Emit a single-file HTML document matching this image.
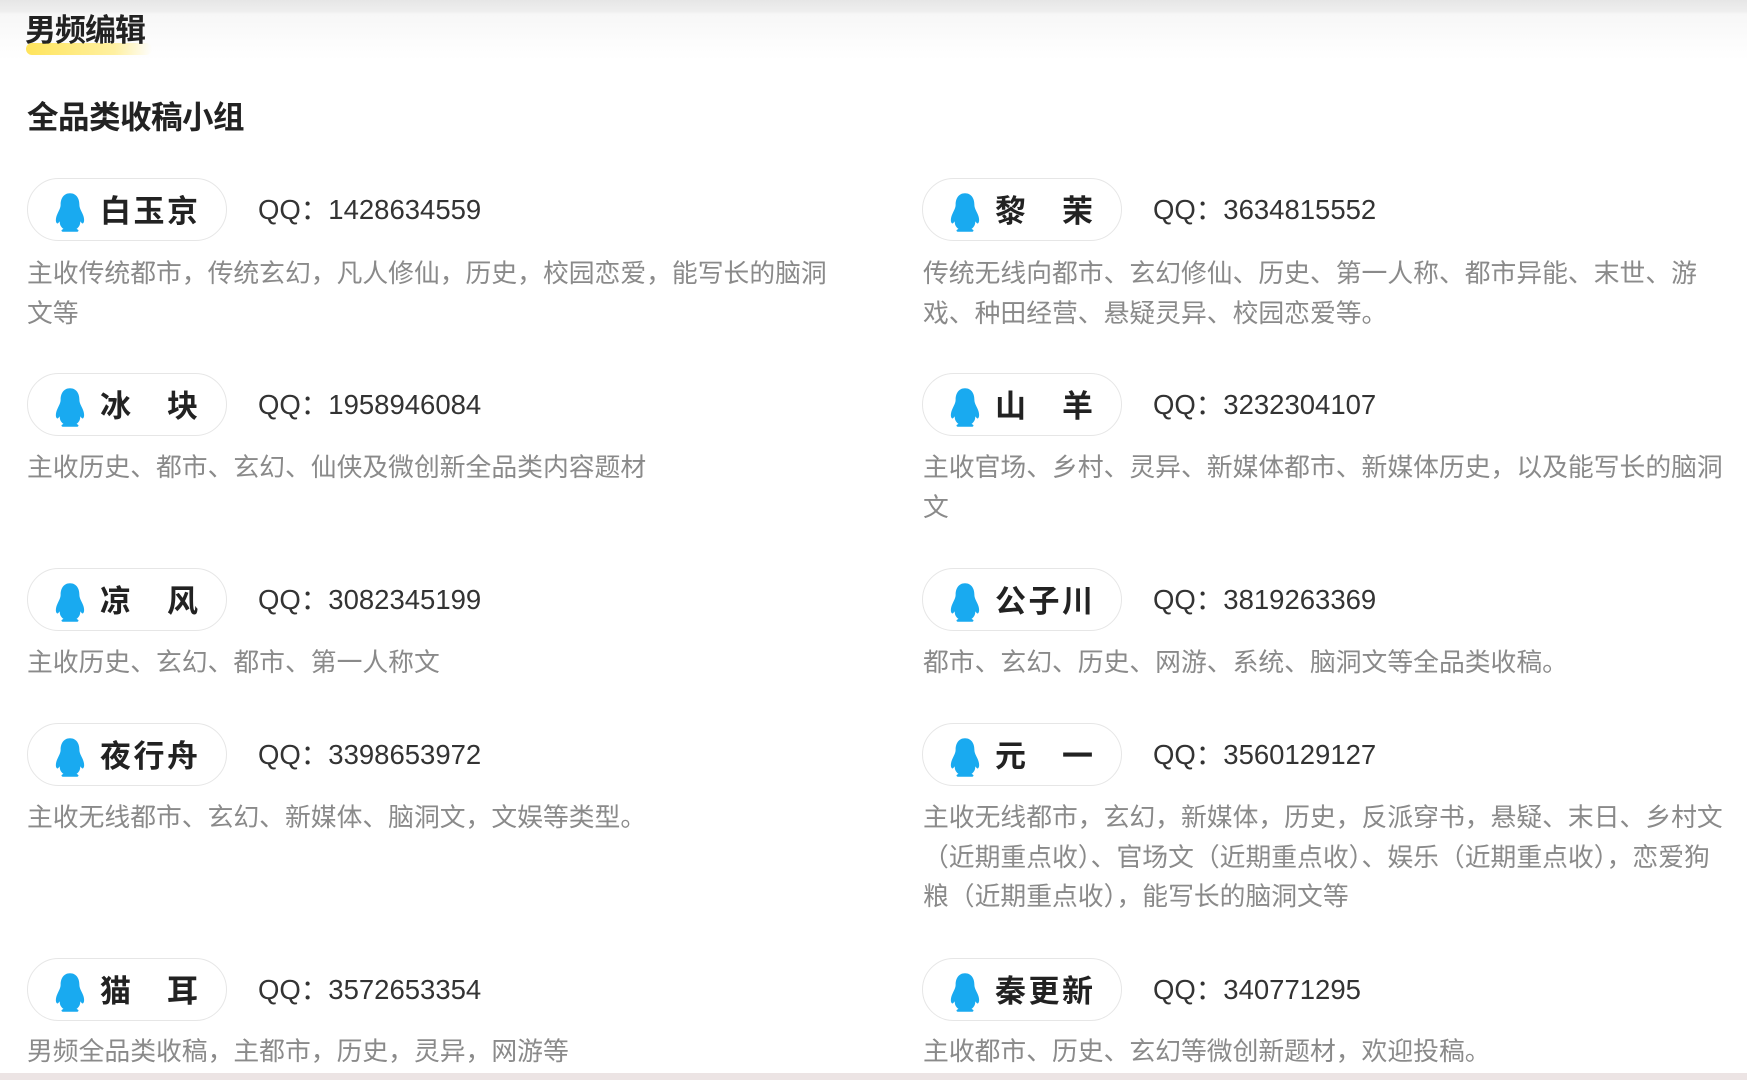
<!DOCTYPE html>
<html><head><meta charset="utf-8"><style>
body{margin:0;width:1747px;height:1080px;background:#fff;font-family:"Liberation Sans","Noto Sans CJK SC",sans-serif;position:relative;overflow:hidden}
.top{position:absolute;left:0;top:0;width:1747px;height:60px;background:linear-gradient(#e6e6e6 0,#eeeeee 11px,#f7f7f7 14px,#fff 60px)}
.h1{position:absolute;left:25px;top:11px;font-size:31px;font-weight:bold;color:#222;line-height:40px;letter-spacing:-1px}
.hl{position:absolute;left:26px;top:43px;width:126px;height:12px;border-radius:6px;background:linear-gradient(90deg,#ffe45c,#fff0a0 70%,rgba(255,250,220,0))}
.h2{position:absolute;left:27px;top:97px;font-size:31.5px;font-weight:bold;color:#222;line-height:40px;letter-spacing:-0.5px}
.pill{position:absolute;width:200px;height:63px;box-sizing:border-box;border:1.5px solid #e6e6e6;border-radius:32px;background:#fff}
.pill svg{position:absolute;left:27px;top:13px}
.name{position:absolute;left:72px;top:3px;width:98px;line-height:60px;font-size:31px;font-weight:bold;color:#222;text-align:justify;text-align-last:justify}
.qq{position:absolute;font-size:27.5px;color:#333;line-height:40px}
.d{position:absolute;width:808px;font-size:25.8px;color:#8a8a8a;line-height:39.5px}
.bot{position:absolute;left:0;top:1073px;width:1747px;height:7px;background:#ece4e4}
</style></head><body>
<div class="top"></div>
<div class="hl"></div>
<div class="h1">男频编辑</div>
<div class="h2">全品类收稿小组</div>

<div class="pill" style="left:27px;top:178px"><svg width="30" height="40" viewBox="0 0 32 42"><path d="M16 1C9 1 6 7 6 13c0 3-1 5-3 9-2 4-3 9-1 11 1 1 2-1 3-2 0 3 1 6 4 8-2 1-3 2-1 3h16c2-1 1-2-1-3 3-2 4-5 4-8 1 1 2 3 3 2 2-2 1-7-1-11-2-4-3-6-3-9 0-6-3-12-10-12z" fill="#19aaf0"/></svg><div class="name">白玉京</div></div>
<div class="qq" style="left:258px;top:190px">QQ：1428634559</div>
<div class="d" style="left:27px;top:255px">主收传统都市，传统玄幻，凡人修仙，历史，校园恋爱，能写长的脑洞文等</div>

<div class="pill" style="left:922px;top:178px"><svg width="30" height="40" viewBox="0 0 32 42"><path d="M16 1C9 1 6 7 6 13c0 3-1 5-3 9-2 4-3 9-1 11 1 1 2-1 3-2 0 3 1 6 4 8-2 1-3 2-1 3h16c2-1 1-2-1-3 3-2 4-5 4-8 1 1 2 3 3 2 2-2 1-7-1-11-2-4-3-6-3-9 0-6-3-12-10-12z" fill="#19aaf0"/></svg><div class="name">黎茉</div></div>
<div class="qq" style="left:1153px;top:190px">QQ：3634815552</div>
<div class="d" style="left:923px;top:255px">传统无线向都市、玄幻修仙、历史、第一人称、都市异能、末世、游戏、种田经营、悬疑灵异、校园恋爱等。</div>

<div class="pill" style="left:27px;top:373px"><svg width="30" height="40" viewBox="0 0 32 42"><path d="M16 1C9 1 6 7 6 13c0 3-1 5-3 9-2 4-3 9-1 11 1 1 2-1 3-2 0 3 1 6 4 8-2 1-3 2-1 3h16c2-1 1-2-1-3 3-2 4-5 4-8 1 1 2 3 3 2 2-2 1-7-1-11-2-4-3-6-3-9 0-6-3-12-10-12z" fill="#19aaf0"/></svg><div class="name">冰块</div></div>
<div class="qq" style="left:258px;top:385px">QQ：1958946084</div>
<div class="d" style="left:27px;top:449px">主收历史、都市、玄幻、仙侠及微创新全品类内容题材</div>

<div class="pill" style="left:922px;top:373px"><svg width="30" height="40" viewBox="0 0 32 42"><path d="M16 1C9 1 6 7 6 13c0 3-1 5-3 9-2 4-3 9-1 11 1 1 2-1 3-2 0 3 1 6 4 8-2 1-3 2-1 3h16c2-1 1-2-1-3 3-2 4-5 4-8 1 1 2 3 3 2 2-2 1-7-1-11-2-4-3-6-3-9 0-6-3-12-10-12z" fill="#19aaf0"/></svg><div class="name">山羊</div></div>
<div class="qq" style="left:1153px;top:385px">QQ：3232304107</div>
<div class="d" style="left:923px;top:449px">主收官场、乡村、灵异、新媒体都市、新媒体历史，以及能写长的脑洞文</div>

<div class="pill" style="left:27px;top:568px"><svg width="30" height="40" viewBox="0 0 32 42"><path d="M16 1C9 1 6 7 6 13c0 3-1 5-3 9-2 4-3 9-1 11 1 1 2-1 3-2 0 3 1 6 4 8-2 1-3 2-1 3h16c2-1 1-2-1-3 3-2 4-5 4-8 1 1 2 3 3 2 2-2 1-7-1-11-2-4-3-6-3-9 0-6-3-12-10-12z" fill="#19aaf0"/></svg><div class="name">凉风</div></div>
<div class="qq" style="left:258px;top:580px">QQ：3082345199</div>
<div class="d" style="left:27px;top:644px">主收历史、玄幻、都市、第一人称文</div>

<div class="pill" style="left:922px;top:568px"><svg width="30" height="40" viewBox="0 0 32 42"><path d="M16 1C9 1 6 7 6 13c0 3-1 5-3 9-2 4-3 9-1 11 1 1 2-1 3-2 0 3 1 6 4 8-2 1-3 2-1 3h16c2-1 1-2-1-3 3-2 4-5 4-8 1 1 2 3 3 2 2-2 1-7-1-11-2-4-3-6-3-9 0-6-3-12-10-12z" fill="#19aaf0"/></svg><div class="name">公子川</div></div>
<div class="qq" style="left:1153px;top:580px">QQ：3819263369</div>
<div class="d" style="left:923px;top:644px">都市、玄幻、历史、网游、系统、脑洞文等全品类收稿。</div>

<div class="pill" style="left:27px;top:723px"><svg width="30" height="40" viewBox="0 0 32 42"><path d="M16 1C9 1 6 7 6 13c0 3-1 5-3 9-2 4-3 9-1 11 1 1 2-1 3-2 0 3 1 6 4 8-2 1-3 2-1 3h16c2-1 1-2-1-3 3-2 4-5 4-8 1 1 2 3 3 2 2-2 1-7-1-11-2-4-3-6-3-9 0-6-3-12-10-12z" fill="#19aaf0"/></svg><div class="name">夜行舟</div></div>
<div class="qq" style="left:258px;top:735px">QQ：3398653972</div>
<div class="d" style="left:27px;top:799px">主收无线都市、玄幻、新媒体、脑洞文，文娱等类型。</div>

<div class="pill" style="left:922px;top:723px"><svg width="30" height="40" viewBox="0 0 32 42"><path d="M16 1C9 1 6 7 6 13c0 3-1 5-3 9-2 4-3 9-1 11 1 1 2-1 3-2 0 3 1 6 4 8-2 1-3 2-1 3h16c2-1 1-2-1-3 3-2 4-5 4-8 1 1 2 3 3 2 2-2 1-7-1-11-2-4-3-6-3-9 0-6-3-12-10-12z" fill="#19aaf0"/></svg><div class="name">元一</div></div>
<div class="qq" style="left:1153px;top:735px">QQ：3560129127</div>
<div class="d" style="left:923px;top:799px">主收无线都市，玄幻，新媒体，历史，反派穿书，悬疑、末日、乡村文（近期重点收）、官场文（近期重点收）、娱乐（近期重点收），恋爱狗粮（近期重点收），能写长的脑洞文等</div>

<div class="pill" style="left:27px;top:958px"><svg width="30" height="40" viewBox="0 0 32 42"><path d="M16 1C9 1 6 7 6 13c0 3-1 5-3 9-2 4-3 9-1 11 1 1 2-1 3-2 0 3 1 6 4 8-2 1-3 2-1 3h16c2-1 1-2-1-3 3-2 4-5 4-8 1 1 2 3 3 2 2-2 1-7-1-11-2-4-3-6-3-9 0-6-3-12-10-12z" fill="#19aaf0"/></svg><div class="name">猫耳</div></div>
<div class="qq" style="left:258px;top:970px">QQ：3572653354</div>
<div class="d" style="left:27px;top:1033px">男频全品类收稿，主都市，历史，灵异，网游等</div>

<div class="pill" style="left:922px;top:958px"><svg width="30" height="40" viewBox="0 0 32 42"><path d="M16 1C9 1 6 7 6 13c0 3-1 5-3 9-2 4-3 9-1 11 1 1 2-1 3-2 0 3 1 6 4 8-2 1-3 2-1 3h16c2-1 1-2-1-3 3-2 4-5 4-8 1 1 2 3 3 2 2-2 1-7-1-11-2-4-3-6-3-9 0-6-3-12-10-12z" fill="#19aaf0"/></svg><div class="name">秦更新</div></div>
<div class="qq" style="left:1153px;top:970px">QQ：340771295</div>
<div class="d" style="left:923px;top:1033px">主收都市、历史、玄幻等微创新题材，欢迎投稿。</div>

<div class="bot"></div>
</body></html>
